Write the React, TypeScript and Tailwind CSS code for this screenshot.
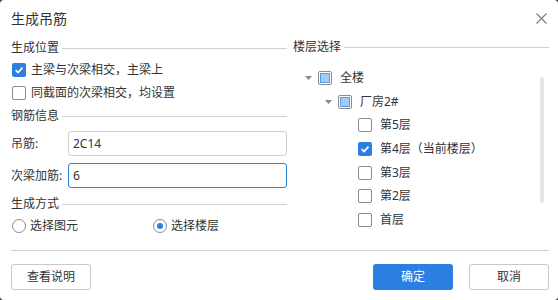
import React from "react";

const font = { fontFamily: '"Noto Sans", "Noto Sans CJK SC", sans-serif' };

function CheckBox({ state }: { state: "on" | "off" | "part" }) {
  if (state === "on") {
    return (
      <span className="flex h-[14px] w-[14px] shrink-0 items-center justify-center rounded-[2px] bg-[#2b7fe0]">
        <svg width="10" height="10" viewBox="0 0 10 10">
          <path d="M1.6 5.2 L4 7.5 L8.5 2.6" fill="none" stroke="#fff" strokeWidth="1.7" />
        </svg>
      </span>
    );
  }
  if (state === "part") {
    return (
      <span className="flex h-[14px] w-[14px] shrink-0 items-center justify-center rounded-[2px] border border-[#8c8c8c] bg-white">
        <span className="h-[10px] w-[10px] border border-[#5a9be6] bg-[#a3cbf5]" />
      </span>
    );
  }
  return <span className="h-[14px] w-[14px] shrink-0 rounded-[2px] border border-[#8c8c8c] bg-white" />;
}

function Radio({ on }: { on?: boolean }) {
  return (
    <span className="flex h-[14px] w-[14px] shrink-0 items-center justify-center rounded-full border border-[#8c8c8c] bg-white">
      {on && <span className="h-[6px] w-[6px] rounded-full bg-[#2b7fe0]" />}
    </span>
  );
}

function Section({ title }: { title: string }) {
  return (
    <div className="flex h-[22px] items-center gap-[3px]">
      <span className="text-[12px] text-[#333]">{title}</span>
      <span className="h-px flex-1 bg-[#d0d0d0]" />
    </div>
  );
}

function Caret() {
  return (
    <svg width="7" height="4" viewBox="0 0 7 4" className="shrink-0">
      <path d="M0 0 L7 0 L3.5 4 Z" fill="#8a8a8a" />
    </svg>
  );
}

type Node = { label: string; level: number; caret?: boolean; state: "on" | "off" | "part" };

const tree: Node[] = [
  { label: "全楼", level: 0, caret: true, state: "part" },
  { label: "厂房2#", level: 1, caret: true, state: "part" },
  { label: "第5层", level: 2, state: "off" },
  { label: "第4层（当前楼层）", level: 2, state: "on" },
  { label: "第3层", level: 2, state: "off" },
  { label: "第2层", level: 2, state: "off" },
  { label: "首层", level: 2, state: "off" },
];

const pads = ["pl-[12px]", "pl-[32px]", "pl-[52px]"];

export default function App() {
  return (
    <div className="h-[300px] w-[558px] bg-[#3a3a3a]" style={font}>
      <div className="flex h-[300px] w-[558px] flex-col rounded-[4px] bg-white text-[#333]">
        <div className="flex h-[37px] items-center justify-between pl-[11px] pr-[11px]">
          <span className="text-[14px] text-[#333]">生成吊筋</span>
          <svg width="11" height="11" viewBox="0 0 11 11">
            <path d="M0.5 0.5 L10.5 10.5 M10.5 0.5 L0.5 10.5" stroke="#7a7a7a" strokeWidth="1.1" />
          </svg>
        </div>
        <div className="flex h-[213px] gap-[6px] pl-[11px] pr-[9px]">
          <div className="flex w-[276px] flex-col">
            <Section title="生成位置" />
            <div className="mt-[-1px] flex h-[23px] items-center gap-[5px] pl-px text-[12px]">
              <CheckBox state="on" />
              <span>主梁与次梁相交，主梁上</span>
            </div>
            <div className="flex h-[23px] items-center gap-[5px] pl-px text-[12px]">
              <CheckBox state="off" />
              <span>同截面的次梁相交，均设置</span>
            </div>
            <div className="mt-[1px]">
              <Section title="钢筋信息" />
            </div>
            <div className="mt-[4px] flex h-[25px] items-center">
              <span className="w-[57px] text-[12px]">吊筋:</span>
              <div className="flex h-[25px] flex-1 items-center rounded-[3px] border border-[#cfcfcf] pl-[4px] text-[12px]">2C14</div>
            </div>
            <div className="mt-[7px] flex h-[25px] items-center">
              <span className="w-[57px] text-[12px]">次梁加筋:</span>
              <div className="flex h-[25px] flex-1 items-center rounded-[3px] border border-[#2b7fe0] pl-[4px] text-[12px]">6</div>
            </div>
            <div className="mt-[5px]">
              <Section title="生成方式" />
            </div>
            <div className="mt-[0px] flex h-[22px] items-center pl-px text-[12px]">
              <div className="flex w-[141px] items-center gap-[4px]">
                <Radio />
                <span>选择图元</span>
              </div>
              <div className="flex items-center gap-[4px]">
                <Radio on />
                <span>选择楼层</span>
              </div>
            </div>
          </div>
          <div className="flex flex-1 flex-col">
            <div className="mt-[-1px]">
              <Section title="楼层选择" />
            </div>
            <div className="relative mt-[8px] flex-1">
              {tree.map((n) => (
                <div key={n.label} className={`flex h-[23.7px] items-center text-[12px] ${pads[n.level]}`}>
                  <span className="flex w-[13px] shrink-0 items-center">{n.caret && <Caret />}</span>
                  <CheckBox state={n.state} />
                  <span className="ml-[8px]">{n.label}</span>
                </div>
              ))}
              <div className="absolute right-[5px] top-[11px] h-[126px] w-[4px] rounded-full bg-[#e6e6e6]" />
            </div>
          </div>
        </div>
        <div className="ml-[11px] mr-[9px] h-px bg-[#d0d0d0]" />
        <div className="flex items-center pl-[11px] pr-[9px] pt-[13px] text-[12px]">
          <button className="flex h-[26px] w-[80px] items-center justify-center rounded-[3px] border border-[#c8c8c8] bg-white text-[#333]">查看说明</button>
          <div className="flex-1" />
          <button className="flex h-[26px] w-[80px] items-center justify-center rounded-[3px] bg-[#2b7fe0] text-white">确定</button>
          <button className="ml-[16px] flex h-[26px] w-[80px] items-center justify-center rounded-[3px] border border-[#c8c8c8] bg-white text-[#333]">取消</button>
        </div>
      </div>
    </div>
  );
}
